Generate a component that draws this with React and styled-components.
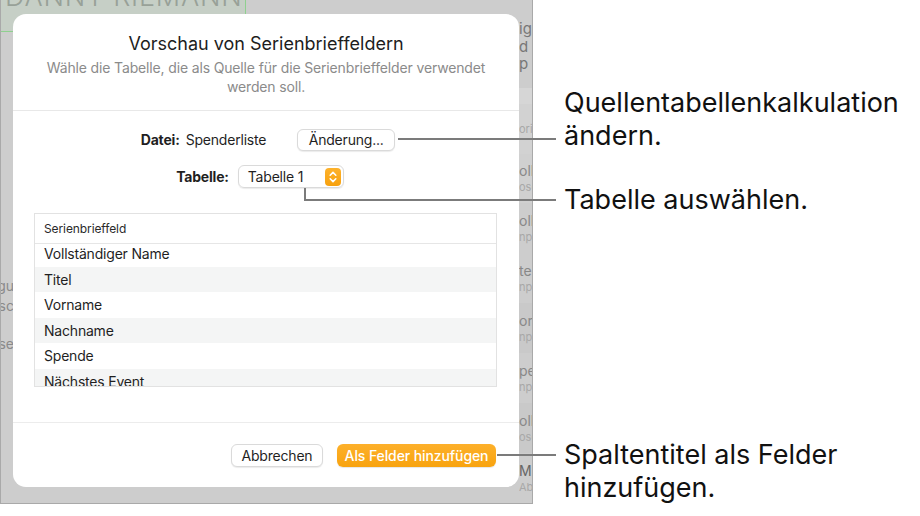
import React from "react";
import styled, { createGlobalStyle } from "styled-components";

const Global = createGlobalStyle`
  html, body { margin: 0; padding: 0; background: #fff; }
  body { font-family: "Inter", "Liberation Sans", sans-serif; -webkit-font-smoothing: antialiased; }
  * { box-sizing: border-box; }
`;

const Page = styled.div`
  position: relative;
  width: 920px;
  height: 516px;
  display: flex;
  align-items: flex-start;
  overflow: hidden;
  background: #fff;
`;

const Shot = styled.div`
  position: relative;
  width: 533px;
  height: 504px;
  flex: none;
  display: grid;
  grid-template-columns: 12px 506px 1fr;
  background: #cdcdcd;
  border-left: 1px solid #a9a9a9;
  border-right: 1px solid #a9a9a9;
  border-bottom: 1px solid #a9a9a9;
  overflow: hidden;
`;

/* backdrop banner of the screenshot, partly covered by the dialog */
const NameBanner = styled.div`
  position: absolute;
  left: 0;
  top: 0;
  width: 245px;
  height: 32px;
  background: #c6cfc6;
  border-right: 1px solid #8fd08f;
  border-bottom: 1px solid #8fd08f;
  overflow: hidden;
`;

const BannerText = styled.div`
  font-size: 27px;
  line-height: 28px;
  font-weight: 300;
  letter-spacing: 0.8px;
  color: #98a198;
  margin-top: -17px;
  margin-left: 4px;
  white-space: nowrap;
`;

const LeftStrip = styled.div`
  display: flex;
  flex-direction: column;
  align-items: flex-end;
  padding-top: 278px;
  gap: 5px;
  overflow: hidden;
`;

const LeftItem = styled.div`
  font-size: 14px;
  line-height: 15px;
  color: #8a8a8a;
  white-space: nowrap;
  margin-right: -1px;
  margin-top: ${(p) => p.$mt || 0}px;
`;

const RightStrip = styled.div`
  display: flex;
  flex-direction: column;
  overflow: hidden;
  padding-top: 20px;
`;

const RightHead = styled.div`
  font-size: 15px;
  line-height: 17.5px;
  color: #777;
  white-space: nowrap;
`;

const RightBand = styled.div`
  height: ${(p) => p.$h}px;
  background: ${(p) => p.$bg || "transparent"};
`;

const RightItem = styled.div`
  height: 53px;
  display: flex;
  flex-direction: column;
  justify-content: center;
  gap: 3px;
  background: ${(p) => p.$bg || "transparent"};
  white-space: nowrap;
`;

const ItemTitle = styled.div`
  font-size: 14px;
  line-height: 15px;
  color: ${(p) => (p.$dark ? "#666" : "#888")};
`;

const ItemSub = styled.div`
  font-size: 11px;
  line-height: 12px;
  color: #a8a8a8;
`;

const Dialog = styled.div`
  margin-top: 14px;
  width: 506px;
  height: 473px;
  background: #fff;
  border-radius: 13px;
  display: flex;
  flex-direction: column;
  position: relative;
`;

const Header = styled.div`
  padding: 18px 20px 14px;
  text-align: center;
  border-bottom: 1px solid #e8e8e8;
`;

const Title = styled.div`
  font-size: 18px;
  line-height: 23px;
  color: #1d1d1d;
`;

const Subtitle = styled.div`
  margin-top: 3px;
  font-size: 14px;
  line-height: 19px;
  color: #8b8b8b;
  letter-spacing: -0.15px;
`;

const Body = styled.div`
  flex: 1;
  display: flex;
  flex-direction: column;
  padding-top: 17px;
`;

const FormRow = styled.div`
  display: flex;
  align-items: center;
  justify-content: center;
  height: 23px;
  margin-left: ${(p) => p.$shift || 0}px;
  margin-top: ${(p) => p.$mt || 0}px;
`;

const Label = styled.span`
  font-size: 14px;
  font-weight: 700;
  color: #1f1f1f;
  margin-right: ${(p) => p.$gap}px;
  letter-spacing: -0.2px;
`;

const Value = styled.span`
  font-size: 14px;
  color: #1f1f1f;
  margin-right: ${(p) => p.$gap}px;
  letter-spacing: -0.2px;
`;

const PlainButton = styled.button`
  font-family: inherit;
  height: ${(p) => p.$h || 22}px;
  width: ${(p) => p.$w}px;
  padding: 0;
  font-size: 14px;
  color: #1f1f1f;
  background: #fff;
  border: 1px solid #dadada;
  border-radius: 6px;
  box-shadow: 0 1px 1px rgba(0, 0, 0, 0.08);
  letter-spacing: -0.2px;
`;

const Select = styled.div`
  width: 106px;
  height: 23px;
  display: flex;
  align-items: center;
  justify-content: space-between;
  padding: 0 2px 0 9px;
  border: 1px solid #dadada;
  border-radius: 6px;
  box-shadow: 0 1px 1px rgba(0, 0, 0, 0.08);
  font-size: 14px;
  color: #1f1f1f;
  letter-spacing: -0.2px;
`;

const Stepper = styled.span`
  width: 16px;
  height: 18px;
  border-radius: 4px;
  background: linear-gradient(#fdb22c, #f7a10e);
  display: flex;
  align-items: center;
  justify-content: center;
`;

const TableBox = styled.div`
  margin: 25px 22px 0 21px;
  height: 174px;
  border: 1px solid #e2e2e2;
  display: flex;
  flex-direction: column;
  overflow: hidden;
`;

const TableHead = styled.div`
  height: 30px;
  flex: none;
  display: flex;
  align-items: center;
  padding-left: 9px;
  font-size: 12px;
  color: #2a2a2a;
  border-bottom: 1px solid #e6e6e6;
  letter-spacing: -0.1px;
`;

const Rows = styled.div`
  flex: 1;
  overflow: hidden;
`;

const RowList = styled.div`
  margin-top: -3px;
`;

const Row = styled.div`
  height: 25.5px;
  display: flex;
  align-items: center;
  padding-left: 9px;
  font-size: 14px;
  color: #1f1f1f;
  background: ${(p) => (p.$alt ? "#f4f5f5" : "#fff")};
  letter-spacing: -0.2px;
`;

const Footer = styled.div`
  height: 65px;
  border-top: 1px solid #ececec;
  display: flex;
  align-items: center;
  justify-content: flex-end;
  gap: 14px;
  padding: 0 23px 0 0;
`;

const PrimaryButton = styled.button`
  font-family: inherit;
  height: 23px;
  width: 159px;
  padding: 0;
  font-size: 14px;
  font-weight: 500;
  color: #fff;
  background: linear-gradient(#fdb02a, #f8a30f);
  border: none;
  border-radius: 6px;
  box-shadow: 0 1px 1px rgba(0, 0, 0, 0.1);
  letter-spacing: -0.1px;
`;

const Notes = styled.div`
  flex: 1;
  display: flex;
  flex-direction: column;
  padding-left: 31px;
`;

const Note = styled.div`
  margin-top: ${(p) => p.$mt}px;
  font-size: 27px;
  line-height: 33px;
  color: #111;
`;

const Leaders = styled.svg`
  position: absolute;
  left: 0;
  top: 0;
  pointer-events: none;
`;

const rows = [
  "Vollständiger Name",
  "Titel",
  "Vorname",
  "Nachname",
  "Spende",
  "Nächstes Event",
];

const rightItems = [
  { t: "olls", s: "ose", bg: "#d0d0d0" },
  { t: "olls", s: "np", bg: "#cdcdcd" },
  { t: "te", s: "np", bg: "#cdcdcd" },
  { t: "orn", s: "np", bg: "#c9c9c9" },
  { t: "pe", s: "np", bg: "#cdcdcd" },
  { t: "olls", s: "ose", bg: "#c9c9c9" },
  { t: "M", s: "Abse", bg: "#cdcdcd", dark: true },
];

export default function App() {
  return (
    <>
      <Global />
      <Page>
        <Shot>
          <NameBanner>
            <BannerText>DANNY RIEMANN</BannerText>
          </NameBanner>
          <LeftStrip>
            <LeftItem>gu</LeftItem>
            <LeftItem>sc</LeftItem>
            <LeftItem $mt={18}>se</LeftItem>
          </LeftStrip>

          <Dialog>
            <Header>
              <Title>Vorschau von Serienbrieffeldern</Title>
              <Subtitle>
                Wähle die Tabelle, die als Quelle für die Serienbrieffelder verwendet
                <br />
                werden soll.
              </Subtitle>
            </Header>
            <Body>
              <FormRow $shift={4}>
                <Label $gap={6}>Datei:</Label>
                <Value $gap={31}>Spenderliste</Value>
                <PlainButton $w={98}>Änderung...</PlainButton>
              </FormRow>
              <FormRow $mt={14} $shift={-12}>
                <Label $gap={9}>Tabelle:</Label>
                <Select>
                  <span>Tabelle 1</span>
                  <Stepper>
                    <svg width="10" height="14" viewBox="0 0 10 14">
                      <path
                        d="M2.2 5.2 L5 2.4 L7.8 5.2 M2.2 8.8 L5 11.6 L7.8 8.8"
                        fill="none"
                        stroke="#fff"
                        strokeWidth="1.6"
                        strokeLinecap="round"
                        strokeLinejoin="round"
                      />
                    </svg>
                  </Stepper>
                </Select>
              </FormRow>
              <TableBox>
                <TableHead>Serienbrieffeld</TableHead>
                <Rows>
                  <RowList>
                    {rows.map((r, i) => (
                      <Row key={r} $alt={i % 2 === 1}>
                        {r}
                      </Row>
                    ))}
                  </RowList>
                </Rows>
              </TableBox>
            </Body>
            <Footer>
              <PlainButton $w={92} $h={23}>Abbrechen</PlainButton>
              <PrimaryButton>Als Felder hinzufügen</PrimaryButton>
            </Footer>
          </Dialog>

          <RightStrip>
            <RightHead>ig</RightHead>
            <RightHead>d</RightHead>
            <RightHead>p</RightHead>
            <RightBand $h={16} />
            <RightBand $h={17} $bg="#d6d6d6" />
            <RightItem $bg="#d2d2d2">
              <ItemSub>ori</ItemSub>
            </RightItem>
            {rightItems.map((it, i) => (
              <RightItem key={i} $bg={it.bg}>
                <ItemTitle $dark={it.dark}>{it.t}</ItemTitle>
                <ItemSub>{it.s}</ItemSub>
              </RightItem>
            ))}
          </RightStrip>
        </Shot>

        <Notes>
          <Note $mt={86}>
            Quellentabellenkalkulation
            <br />
            ändern.
          </Note>
          <Note $mt={31}>Tabelle auswählen.</Note>
          <Note $mt={222}>
            Spaltentitel als Felder
            <br />
            hinzufügen.
          </Note>
        </Notes>

        <Leaders width="920" height="516" viewBox="0 0 920 516">
          <g stroke="#7b7b7b" strokeWidth="2" fill="none">
            <path d="M398 139 H556" />
            <path d="M305 188 V200 H556" />
            <path d="M497 455 H556" />
          </g>
        </Leaders>
      </Page>
    </>
  );
}
